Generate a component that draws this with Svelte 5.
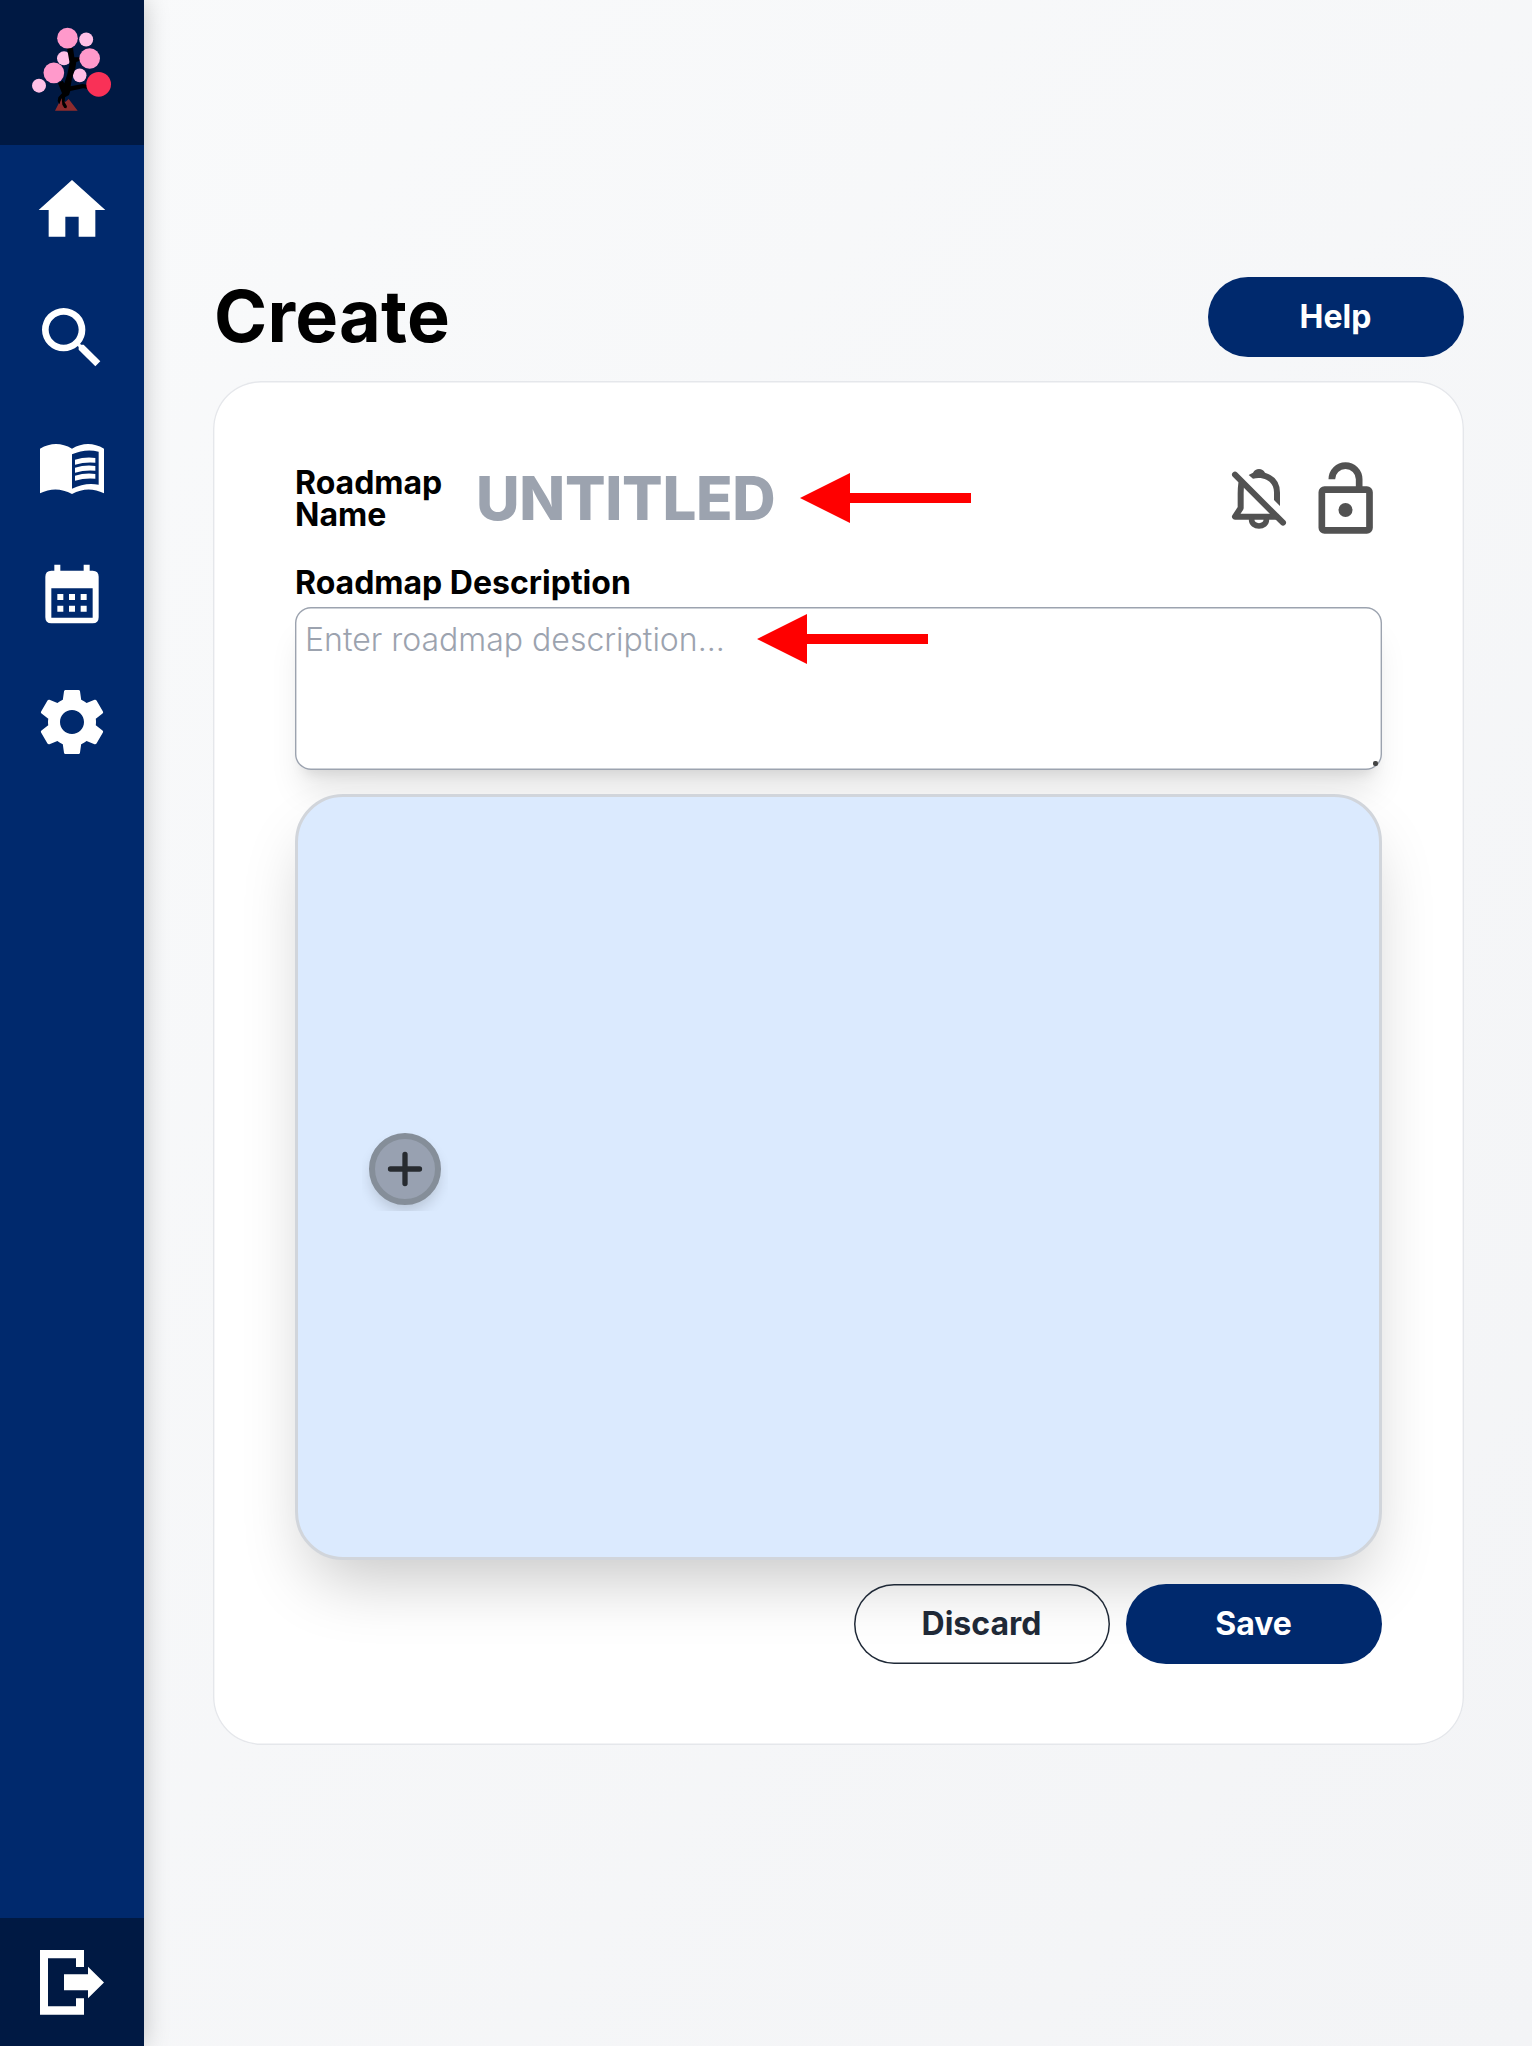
<script>
  let name = $state('');
  let description = $state('');
</script>

{#snippet arrow()}
  <svg class="arrow" viewBox="0 0 171 50" width="171" height="50" aria-hidden="true">
    <path d="M0 25 50 0V20H171V30H50V50Z" fill="#ff0000" />
  </svg>
{/snippet}

<div class="page">
  <aside class="sidebar">
    <a class="logo" href="#top" aria-label="Logo">
      <svg viewBox="0 0 432 435" width="144" height="145">
        <g fill="#ffc0e6">
          <circle cx="258.500" cy="118.500" r="21" />
          <circle cx="192" cy="175" r="21" />
          <circle cx="239" cy="226" r="20.500" />
          <circle cx="117" cy="257" r="21" />
        </g>
        <path d="M165 332 185 293 196 306 206 297 233 332Z" fill="#8e2c2e" />
        <path d="M201 144H219L223 172 238 172 242 175 244 181 229 186 226 205 216 235 212 259 247 252 262 254 267 260 261 266 249 265 211 273 207 285 195 292 194 307 201 319 199 325 193 324 187 314 185 294 178 313 173 303 175 292 186 280 174 250 188 242 193 250 202 222 209 190Z" fill="#000" />
        <g fill="#ff99cb">
          <circle cx="202.500" cy="114.500" r="31" />
          <circle cx="269" cy="175.500" r="31" />
          <circle cx="161.500" cy="218.500" r="31" />
        </g>
        <circle cx="296" cy="253" r="37" fill="#f93157" />
      </svg>
    </a>
    <nav>
      <a href="#home" aria-label="Home">
        <svg viewBox="0 0 24 24"><path d="M10 20v-6h4v6h5v-8h3L12 3 2 12h3v8z" /></svg>
      </a>
      <a href="#search" aria-label="Search">
        <svg viewBox="0 0 24 24"><path d="M15.500 14h-.79l-.28-.27A6.471 6.471 0 0 0 16 9.500 6.500 6.500 0 1 0 9.500 16c1.610 0 3.090-.59 4.230-1.570l.27.28v.79l5 4.990L20.490 19l-4.990-5zm-6 0C7.010 14 5 11.990 5 9.500S7.010 5 9.500 5 14 7.010 14 9.500 11.990 14 9.500 14z" /></svg>
      </a>
      <a href="#library" aria-label="Library">
        <svg viewBox="96 496 240 240">
          <path fill-rule="evenodd" d="M120 564Q168 536 216 564 264 536 312 564V698Q264 674 216 700 168 674 120 698ZM216 581Q256 563 296 573V672Q256 664 216 684Z" />
          <path d="M225 597Q255 588 286 592V606Q255 603 225 612ZM225 621Q255 612 286 616V630Q255 627 225 636ZM225 645Q255 636 286 640V654Q255 651 225 660Z" />
        </svg>
      </a>
      <a href="#calendar" aria-label="Calendar">
        <svg viewBox="96 100 240 240">
          <path fill-rule="evenodd" d="M163 132H181V150H251V132H269V150H278Q296 150 296 168V290Q296 308 278 308H154Q136 308 136 290V168Q136 150 154 150H163ZM154 203V291H278V203Z" />
          <path d="M172 220h18v18h-18zM207 220h18v18h-18zM242 220h18v18h-18zM172 255h18v18h-18zM207 255h18v18h-18zM242 255h18v18h-18z" />
        </svg>
      </a>
      <a href="#settings" aria-label="Settings">
        <svg viewBox="0 0 24 24"><path d="M19.140 12.940c.04-.3.06-.61.06-.94 0-.32-.02-.64-.07-.94l2.030-1.580a.49.49 0 0 0 .12-.61l-1.920-3.320a.488.488 0 0 0-.59-.22l-2.390.96c-.5-.38-1.030-.7-1.620-.94l-.36-2.540a.484.484 0 0 0-.48-.41h-3.840c-.24 0-.43.17-.47.41l-.36 2.540c-.59.24-1.130.57-1.620.94l-2.390-.96c-.22-.08-.47 0-.59.22L2.740 8.870c-.12.21-.08.47.12.61l2.030 1.580c-.05.3-.09.63-.09.94s.02.64.07.94l-2.030 1.580a.49.49 0 0 0-.12.61l1.920 3.320c.12.22.37.29.59.22l2.390-.96c.5.38 1.030.7 1.620.94l.36 2.540c.05.24.24.41.48.41h3.840c.24 0 .44-.17.47-.41l.36-2.540c.59-.24 1.130-.56 1.620-.94l2.390.96c.22.08.47 0 .59-.22l1.920-3.320c.12-.22.07-.47-.12-.61l-2.010-1.580zM12 15.600c-1.980 0-3.600-1.620-3.600-3.600s1.620-3.600 3.600-3.600 3.600 1.620 3.600 3.600-1.620 3.600-3.600 3.600z" /></svg>
      </a>
    </nav>
    <a class="logout" href="#logout" aria-label="Log out">
      <svg viewBox="96 186 240 240">
        <path d="M120 210H252V261H228V235H144V379H228V355H252V404H120ZM192 283H264V260L312 307.500 264 355V331H192Z" />
      </svg>
    </a>
  </aside>

  <main>
    <header>
      <h1>Create</h1>
      <button class="btn primary">Help</button>
    </header>

    <section class="card">
      <div class="name-row">
        <label for="name">Roadmap Name</label>
        <input id="name" placeholder="UNTITLED" bind:value={name} />
        {@render arrow()}
        <div class="toggles">
          <svg viewBox="147 606 180 216" width="60" height="72" fill="none" stroke="#525252" stroke-width="18" stroke-linecap="round" stroke-linejoin="round" aria-label="Notifications off">
            <path d="M165 644 309 788" />
            <path d="M184 670Q182 684 182 700V744L165 770H288" />
            <path d="M215 780A22 18 0 0 0 259 780" stroke-width="17" />
            <path stroke="none" fill="#525252" d="M206 645 219 638Q225 627 237 627 249 627 255 638 300 652 300 698V738L282 720V697C282 664 252 648 219 656Z" />
          </svg>
          <svg viewBox="414 606 164 216" width="55" height="72" fill="none" stroke="#525252" stroke-width="20" aria-label="Unlocked">
            <rect x="425" y="689" width="143" height="122" rx="8" />
            <path d="M455 658A41 41 0 0 1 537 658V689" />
            <circle cx="496" cy="750" r="21" fill="#525252" stroke="none" />
          </svg>
        </div>
      </div>

      <label class="desc-label" for="description">Roadmap Description</label>
      <div class="desc">
        <textarea id="description" placeholder="Enter roadmap description..." bind:value={description}></textarea>
        <div class="pointer">{@render arrow()}</div>
        <span class="grip"></span>
      </div>

      <div class="canvas">
        <div class="node">
          <button class="add" aria-label="Add node">
            <svg viewBox="0 0 60 60" width="60" height="60"><path d="M30 15.500V44.500M15.500 30H44.500" stroke="#272b30" stroke-width="5.300" stroke-linecap="round" /></svg>
          </button>
        </div>
      </div>

      <footer>
        <button class="btn outline">Discard</button>
        <button class="btn primary">Save</button>
      </footer>
    </section>
  </main>
</div>

<style>
  :global(body) {
    margin: 0;
  }

  .page,
  .page * {
    box-sizing: border-box;
  }

  .page {
    display: flex;
    height: 2046px;
    overflow: hidden;
    background: linear-gradient(to bottom right, #f9fafb, #f3f4f6);
    color: #000;
    font-family: Inter, sans-serif;
    font-size: 32px;
  }

  .sidebar {
    display: flex;
    flex-direction: column;
    flex: none;
    width: 144px;
    background: #00296d;
    box-shadow: 0 0 24px rgba(0, 0, 0, 0.22);
  }

  .logo {
    height: 145px;
    background: #001943;
  }

  .logo svg {
    display: block;
  }

  nav {
    flex: 1;
    padding-top: 0.500px;
  }

  nav a,
  .logout {
    display: flex;
    align-items: center;
    justify-content: center;
    height: 128px;
  }

  nav svg,
  .logout svg {
    width: 80px;
    height: 80px;
    fill: #fff;
  }

  .logout {
    background: #001943;
  }

  main {
    flex: 1;
    padding: 276.500px 68.500px 0 69px;
  }

  header {
    display: flex;
    align-items: center;
    justify-content: space-between;
    height: 80px;
    margin-bottom: 24.800px;
  }

  h1 {
    margin: 0;
    padding: 0 0 2px 1px;
    font-size: 72px;
    font-weight: 700;
    line-height: 80px;
    letter-spacing: 0.200px;
  }

  .btn {
    width: 256px;
    height: 80px;
    padding: 0;
    border: 0;
    border-radius: 40px;
    font: 700 32px/48px Inter, sans-serif;
  }

  .primary {
    background: #00296d;
    color: #fff;
  }

  .outline {
    background: transparent;
    box-shadow: inset 0 0 0 1.500px #1f2937;
    color: #1f2937;
  }

  .card {
    height: 1363.500px;
    padding: 81px 82px;
    border-radius: 48px;
    background: #fff;
    box-shadow: inset 0 0 0 1.400px #e5e7eb;
  }

  .name-row {
    display: flex;
    align-items: center;
    height: 72px;
    margin-bottom: 24px;
  }

  label {
    font-weight: 700;
    line-height: 32px;
  }

  .name-row label {
    width: 181px;
    padding-top: 2px;
  }

  input {
    width: 324px;
    height: 72px;
    padding: 0;
    border: 0;
    outline: 0;
    background: transparent;
    font: 800 60px/72px Inter, sans-serif;
    letter-spacing: -0.300px;
  }

  input::placeholder,
  textarea::placeholder {
    color: #9ca3af;
    opacity: 1;
  }

  .arrow {
    display: block;
    flex: none;
  }

  .toggles {
    display: flex;
    gap: 29px;
    margin-left: auto;
    padding-right: 9px;
  }

  .toggles svg {
    display: block;
  }

  .desc-label {
    display: block;
    height: 48.500px;
    padding-top: 1px;
    line-height: 48px;
  }

  .desc {
    position: relative;
    height: 163px;
    margin-bottom: 24px;
  }

  textarea {
    display: block;
    width: 100%;
    height: 100%;
    padding: 9px 10px;
    border: 0;
    border-radius: 16px;
    outline: 0;
    resize: none;
    background: #fff;
    font: 300 32px/48px Inter, sans-serif;
    box-shadow:
      inset 0 0 0 1.400px #9ca3af,
      0 27px 33px -7px rgba(0, 0, 0, 0.1),
      0 11px 13px -8px rgba(0, 0, 0, 0.1);
  }

  .pointer {
    position: absolute;
    top: 7px;
    left: 462px;
  }

  .grip {
    position: absolute;
    right: 4px;
    bottom: 4px;
    width: 5px;
    height: 5px;
    border-radius: 2px;
    background: #444;
  }

  .canvas {
    position: relative;
    height: 766.500px;
    margin-bottom: 24px;
    border: 3px solid #d1d5db;
    border-radius: 48px;
    background: #dbeafe;
    box-shadow: 0 33px 67px -16px rgba(0, 0, 0, 0.23);
  }

  .node {
    position: absolute;
    top: 328px;
    left: 64px;
    width: 86px;
    height: 86px;
    padding: 8px 7px;
    overflow: hidden;
  }

  .add {
    display: block;
    width: 72px;
    height: 72px;
    padding: 0;
    border: 6px solid #858e99;
    border-radius: 50%;
    background: #98a1b1;
    box-shadow: 0 8px 14px -2px rgba(0, 0, 0, 0.16);
  }

  .add svg {
    display: block;
  }

  footer {
    position: relative;
    display: flex;
    justify-content: flex-end;
    gap: 16px;
  }
</style>
